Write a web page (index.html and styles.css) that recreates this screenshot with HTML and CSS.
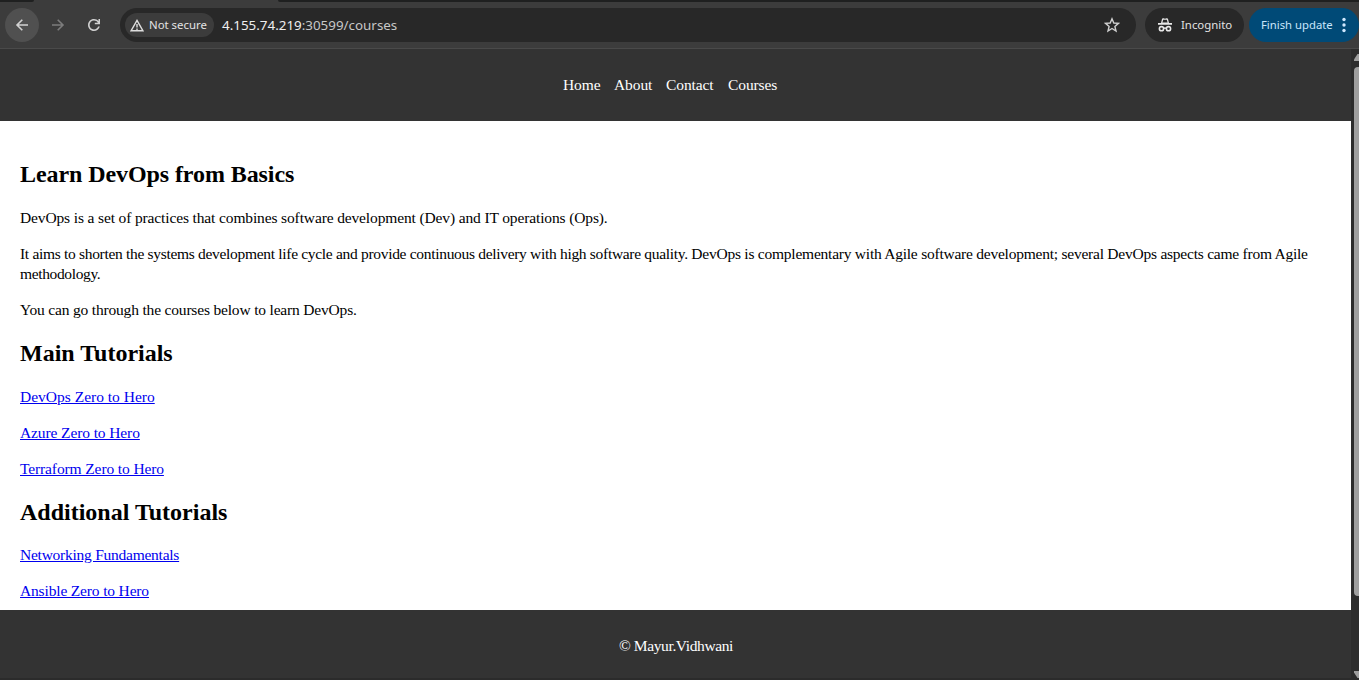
FILE: index.html
```html
<!DOCTYPE html>
<html lang="en">
<head>
<meta charset="utf-8">
<title>Courses</title>
<link rel="stylesheet" href="styles.css">
</head>
<body>
<div class="browser">
  <div class="tabstrip"><span class="tab-left"></span><span class="tab-right"></span></div>
  <div class="toolbar">
    <span class="back"><svg width="16" height="16" viewBox="0 0 16 16" fill="none" stroke="#d2d2d2" stroke-width="1.6"><path d="M14 8H3.500M8.300 2.700L3 8L8.300 13.300"/></svg></span>
    <svg class="forward" width="16" height="16" viewBox="0 0 16 16" fill="none" stroke="#7c7c7c" stroke-width="1.6"><path d="M2 8H12.500M7.700 2.700L13 8L7.700 13.300"/></svg>
    <svg class="reload" width="16" height="16" viewBox="0 0 16 16"><path fill="#d0d0d0" d="M8 14C4.600 14 2 11.300 2 8S4.600 2 8 2C9.800 2 11.400 2.800 12.500 4.100V2H14V7.200H8.800V5.700H11.900C11.100 4.400 9.700 3.600 8 3.600C5.500 3.600 3.600 5.500 3.600 8S5.500 12.400 8 12.400C9.900 12.400 11.500 11.200 12.100 9.500H13.800C13.100 12.100 10.800 14 8 14Z"/></svg>
    <div class="omnibox">
      <span class="chip"><svg width="14" height="13" viewBox="0 0 14 13" fill="none" stroke="#dedede" stroke-width="1.4"><path d="M7 1.400L13 11.800H1Z"/><path d="M7 5V8.500M7 9.500V11"/></svg><span class="chip-text">Not secure</span></span>
      <span class="url"><span class="host">4.155.74.219</span>:30599/courses</span>
      <svg class="star" width="16" height="16" viewBox="0 0 16 16" fill="none" stroke="#d0d0d0" stroke-width="1.400"><path d="M8 1.800L9.800 6L14.400 6.400L10.900 9.400L12 14L8 11.500L4 14L5.100 9.400L1.600 6.400L6.200 6Z"/></svg>
    </div>
    <div class="incognito"><svg width="16" height="16" viewBox="0 0 16 16"><path fill="#e8e8e8" d="M4 6L5 2Q5.300 1 6.500 1.300L8 1.700L9.500 1.300Q10.700 1 11 2L12 6H15V7.700H1V6Z"/><path fill="#282828" d="M6.200 2.800H9.800L10.600 5.600H5.400Z"/><g fill="none" stroke="#e8e8e8" stroke-width="1.600"><circle cx="4.500" cy="11.700" r="2.100"/><circle cx="11.500" cy="11.700" r="2.100"/><path d="M6.500 11.400Q8 10.600 9.500 11.400"/></g></svg><span class="incognito-text">Incognito</span></div>
    <div class="update"><span class="update-text">Finish update</span><svg width="4" height="16" viewBox="0 0 4 16" fill="#cfe8ff"><circle cx="2" cy="2.500" r="1.700"/><circle cx="2" cy="8" r="1.700"/><circle cx="2" cy="13.500" r="1.700"/></svg></div>
  </div>
</div>
<div class="viewport">
  <div class="page">
    <nav class="nav"><a class="n1">Home</a><a class="n2">About</a><a class="n3">Contact</a><a class="n4">Courses</a></nav>
    <main class="content">
      <h2 class="h-learn">Learn DevOps from Basics</h2>
      <p><span class="t-set">DevOps is a set of practices that combines software development (Dev) and IT operations (Ops).</span></p>
      <p><span class="t-aims">It aims to shorten the systems development life cycle and provide continuous delivery with high software quality. </span><span class="t-agile">DevOps is complementary with Agile software development; several DevOps aspects came from Agile</span><br><span class="t-meth">methodology.</span></p>
      <p><span class="t-go">You can go through the courses below to learn DevOps.</span></p>
      <h2 class="h-main">Main Tutorials</h2>
      <p><a class="l-devops" href="#">DevOps Zero to Hero</a></p>
      <p><a class="l-azure" href="#">Azure Zero to Hero</a></p>
      <p><a class="l-terra" href="#">Terraform Zero to Hero</a></p>
      <h2 class="h-add">Additional Tutorials</h2>
      <p><a class="l-net" href="#">Networking Fundamentals</a></p>
      <p><a class="l-ans" href="#">Ansible Zero to Hero</a></p>
    </main>
    <footer class="footer"><span class="copy">© Mayur.Vidhwani</span></footer>
  </div>
  <div class="scrollbar"><span class="arrow-up"></span><span class="thumb"></span><span class="arrow-down"></span></div>
</div>
</body>
</html>
```
FILE: styles.css
```css
* { box-sizing: border-box; }
body { margin: 0; height: 680px; overflow: hidden; display: flex; flex-direction: column; background: #fff; color: #000; font: 15.5px/20px "Liberation Serif", "Times New Roman", serif; }
.browser { height: 49px; flex: none; background: #3c3c3c; border-bottom: 1px solid #4a4a4a; font-family: "Noto Sans", sans-serif; color: #e3e3e3; white-space: nowrap; }
.tabstrip { height: 2px; display: flex; justify-content: space-between; }
.tab-left { width: 34px; background: #1f2020; border-bottom-right-radius: 3px; }
.tab-right { width: 1081px; background: #1f2020; border-bottom-left-radius: 3px; }
.toolbar { height: 46px; display: flex; align-items: center; padding-left: 5px; }
.toolbar svg { flex: none; display: block; }
.back { width: 34px; height: 34px; border-radius: 50%; background: #505050; display: grid; place-items: center; }
.forward { margin-left: 11px; }
.reload { margin-left: 20px; }
.omnibox { width: 1016px; height: 34px; margin-left: 18px; padding: 0 16px 0 5px; border-radius: 17px; background: #282828; display: flex; align-items: center; }
.chip { width: 89px; height: 24px; border-radius: 12px; background: #3c3c3c; padding-left: 5px; display: flex; align-items: center; gap: 5px; font-size: 11.4px; }
.url { margin-left: 8px; font-size: 13.4px; color: #c7c7c7; }
.host { color: #eee; }
.star { margin-left: auto; }
.incognito { width: 99px; height: 34px; margin-left: 9px; padding-left: 12px; border-radius: 17px; background: #282828; display: flex; align-items: center; gap: 8px; font-size: 11.4px; }
.update { width: 110px; height: 34px; margin-left: 5px; padding: 0 13px 0 12px; border-radius: 17px; background: #004a77; color: #c9e6fc; display: flex; align-items: center; justify-content: space-between; font-size: 11.3px; flex: none; }
.viewport { height: 631px; display: flex; }
.page { width: 1351px; height: 631px; display: flex; flex-direction: column; border-bottom: 2px solid #2b2b2b; }
.nav { height: 72px; flex: none; padding: 26px 0 0 563px; background: #333; color: #fff; display: flex; white-space: nowrap; }
.nav a { flex: none; letter-spacing: -0.1px; }
.n1 { width: 51px; } .n2 { width: 52px; } .n3 { width: 62px; }
.content { height: 489px; flex: none; padding: 20px 20px 0; white-space: nowrap; }
.content h2 { margin: 20px 0; font-size: 24px; line-height: 27px; }
.content .h-learn { letter-spacing: -0.08px; }
.content .h-add { margin-bottom: 19px; }
.content p { margin: 16px 0; }
.content a { color: #0000ee; }
.t-set { letter-spacing: -0.134px; }
.t-aims { letter-spacing: -0.31px; }
.t-agile { letter-spacing: -0.235px; }
.t-meth { letter-spacing: -0.36px; }
.t-go { letter-spacing: -0.18px; }
.l-azure { letter-spacing: -0.11px; }
.l-terra { letter-spacing: -0.12px; }
.l-net { letter-spacing: -0.25px; }
.l-ans { letter-spacing: -0.16px; }
.footer { flex: 1; padding: 26px 0 0 619px; background: #333; color: #fff; }
.copy { letter-spacing: -0.39px; }
.scrollbar { width: 8px; background: #2c2c2c; padding: 5px 0 2px 3px; display: flex; flex-direction: column; overflow: hidden; }
.arrow-up { width: 10px; height: 7px; background: #9f9f9f; clip-path: polygon(35% 0, 65% 0, 100% 100%, 0 100%, 0 80%); }
.thumb { width: 10px; height: 529px; margin-top: 6px; border-radius: 4px; background: #9f9f9f; }
.arrow-down { width: 10px; height: 7px; margin-top: auto; background: #9f9f9f; clip-path: polygon(0 0, 100% 0, 65% 100%, 35% 100%, 0 20%); }
```
